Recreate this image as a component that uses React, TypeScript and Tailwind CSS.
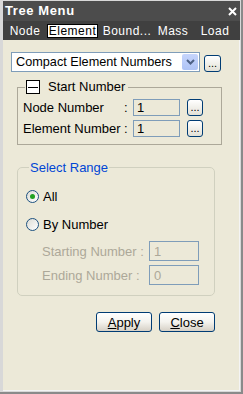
import React from 'react';

const font = { fontFamily: '"Liberation Sans", Arial, sans-serif' };

function DotsButton({ className = '' }: { className?: string }) {
  return (
    <div
      className={`flex items-end justify-center rounded-[3px] border border-[#003c74] bg-gradient-to-b from-white to-[#e3e1d6] pb-[2px] text-[11px] leading-none text-black ${className}`}
    >
      ...
    </div>
  );
}

function Radio({ checked }: { checked?: boolean }) {
  return (
    <div className="flex h-[13px] w-[13px] items-center justify-center rounded-full border border-[#1c5180] bg-gradient-to-br from-[#dcdcd5] to-white">
      {checked && <div className="h-[5px] w-[5px] rounded-full bg-[#21a121]" />}
    </div>
  );
}

function XpButton({ label, hot }: { label: string; hot: string }) {
  return (
    <div className="flex h-[20px] w-[56px] items-center justify-center rounded-[3px] border border-[#003c74] bg-gradient-to-b from-white via-[#f4f3ee] to-[#d6d0c5] text-[13px] leading-[15px] text-black">
      <span className="underline">{hot}</span>
      {label}
    </div>
  );
}

export default function App() {
  return (
    <div
      style={font}
      className="flex h-[394px] w-[243px] flex-col border-r-[2px] border-b-[2px] border-[#8a8a8a] bg-[#d8d8d8] pt-[1px] pl-[3px] pr-[1px] pb-[1px]"
    >
      {/* title */}
      <div className="flex h-[20px] items-center justify-between bg-[#4c4c4c] pl-[2px] pr-[3px]">
        <span className="text-[13px] font-bold tracking-[0.6px] text-white">Tree Menu</span>
        <svg width="9" height="9" viewBox="0 0 9 9">
          <path d="M1 1L8 8M8 1L1 8" stroke="white" strokeWidth="2" />
        </svg>
      </div>
      {/* tabs */}
      <div className="flex h-[19px] items-center bg-[#404040] text-[12px] tracking-[0.5px] text-white">
        <div className="w-[44px] text-center">Node</div>
        <div className="flex h-[14px] w-[51px] items-center justify-center border border-black bg-white text-black">
          Element
        </div>
        <div className="w-[58px] text-center">Bound...</div>
        <div className="w-[34px] text-center">Mass</div>
        <div className="w-[50px] text-center">Load</div>
      </div>
      {/* body */}
      <div className="flex flex-1 flex-col border-r border-b border-[#f4f4f4] bg-[#ece9d8] pl-[8px] pt-[12px]">
        <div className="flex items-end">
          <div className="flex h-[20px] w-[189px] items-center justify-between border border-[#7f9db9] bg-white pl-[4px] pr-[1px]">
            <span className="text-[12.7px] leading-[15px] text-black">Compact Element Numbers</span>
            <div className="flex h-[16px] w-[16px] items-center justify-center rounded-[2px] bg-gradient-to-b from-[#c6d5fc] to-[#aec3f5]">
              <svg width="9" height="6" viewBox="0 0 9 6">
                <path d="M1 1L4.5 4.5L8 1" stroke="#4d6185" strokeWidth="2" fill="none" />
              </svg>
            </div>
          </div>
          <DotsButton className="ml-[4px] h-[17px] w-[17px]" />
        </div>

        <fieldset className="ml-[6px] mt-[8px] w-[205px] border border-[#aca899] px-[5px] pb-[7px]">
          <legend className="ml-[2px] flex h-[14px] items-center px-[1px] leading-[14px]">
            <div className="flex h-[14px] w-[14px] items-center justify-center border border-black bg-white">
              <div className="h-[1px] w-[10px] bg-black" />
            </div>
            <span className="ml-[8px] pr-[2px] text-[13px] text-black">Start Number</span>
          </legend>
          <div className="mt-[5px] flex flex-col gap-[4px] text-[13px] leading-[17px] text-black">
            {['Node Number', 'Element Number'].map((t) => (
              <div key={t} className="flex h-[17px] items-center">
                <span className="w-[101px]">{t}</span>
                <span className="w-[9px]">:</span>
                <div className="flex h-[17px] w-[47px] items-center border border-[#7f9db9] bg-[#ece9d8] pl-[3px]">1</div>
                <DotsButton className="ml-[7px] h-[17px] w-[16px]" />
              </div>
            ))}
          </div>
        </fieldset>

        <fieldset className="ml-[6px] mt-[15px] w-[198px] rounded-[5px] border border-[#d0d0bf] pl-[8px] pb-[10px]">
          <legend className="ml-[3px] px-[1px] text-[13px] leading-[15px] text-[#0046d5]">Select Range</legend>
          <div className="mt-[14px] flex h-[15px] items-center gap-[4px] text-[13px] leading-[15px] text-black">
            <Radio checked />
            <span>All</span>
          </div>
          <div className="mt-[13px] flex h-[15px] items-center gap-[4px] text-[13px] leading-[15px] text-black">
            <Radio />
            <span>By Number</span>
          </div>
          <div className="mt-[9px] flex flex-col gap-[4px] pl-[16px] text-[13px] leading-[15px] text-[#aca899]">
            {[
              ['Starting Number :', '1'],
              ['Ending Number :', '0'],
            ].map(([t, v]) => (
              <div key={t} className="flex items-center">
                <span className="w-[107px]">{t}</span>
                <div className="flex h-[20px] w-[50px] items-center border border-[#7f9db9] pl-[4px]">{v}</div>
              </div>
            ))}
          </div>
        </fieldset>

        <div className="mt-[16px] flex w-[204px] justify-end gap-[7px]">
          <XpButton hot="A" label="pply" />
          <XpButton hot="C" label="lose" />
        </div>
      </div>
    </div>
  );
}
